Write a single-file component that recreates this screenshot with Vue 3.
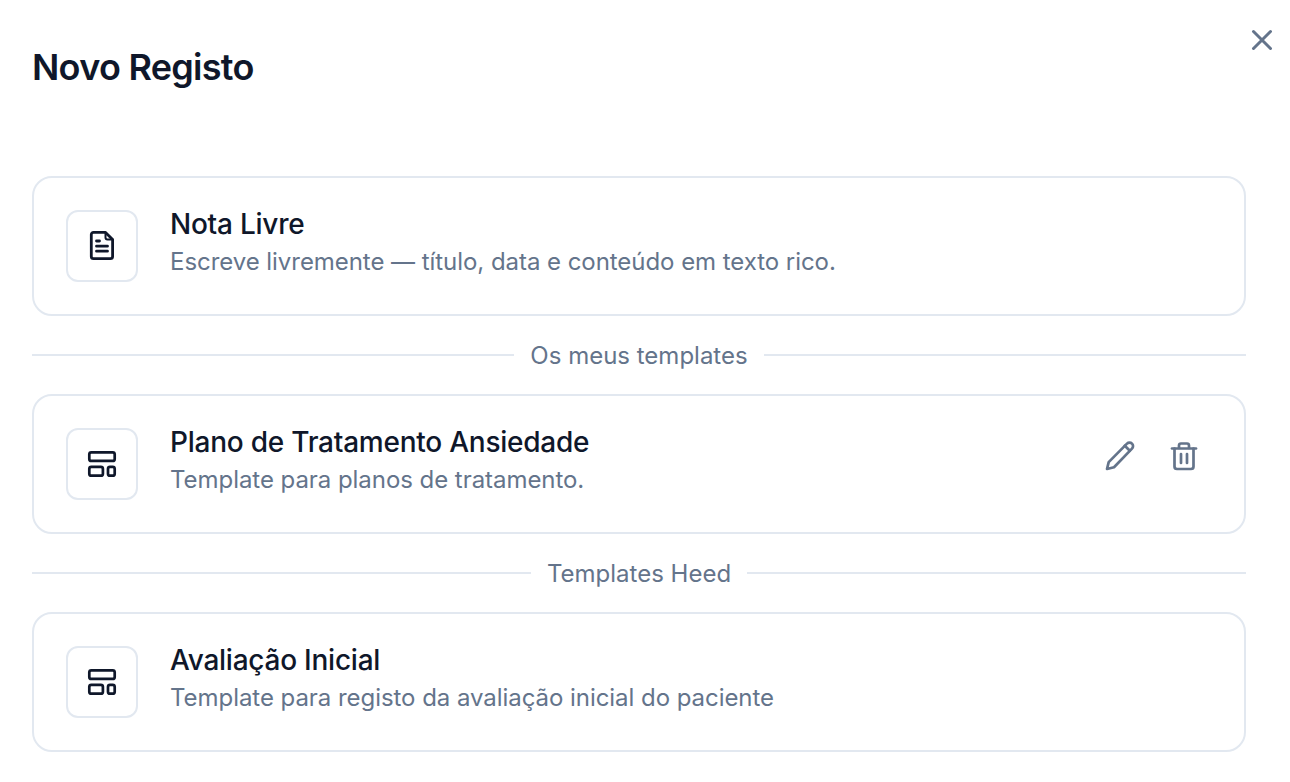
<template>
  <div class="dialog">
    <button class="close" aria-label="Fechar">
      <svg width="32" height="32" viewBox="0 0 32 32" fill="none" stroke="#64748b" stroke-width="3" stroke-linecap="round">
        <path d="M7.5 7.5l17 17M24.5 7.5l-17 17" />
      </svg>
    </button>
    <h1>Novo Registo</h1>

    <div class="list">
      <div class="card">
        <div class="icon-box">
          <svg width="32" height="32" viewBox="0 0 32 32" fill="none" stroke="#0f172a" stroke-width="2.8" stroke-linecap="round" stroke-linejoin="round">
            <path d="M7.5 2.4h12L26.6 9.5v17a2.2 2.2 0 0 1-2.2 2.2H7.5a2.2 2.2 0 0 1-2.2-2.2V4.6a2.2 2.2 0 0 1 2.2-2.2z" />
            <path d="M19.5 2.4v5a2 2 0 0 0 2 2h5" stroke-width="2" />
            <path d="M10.5 11h3M10.5 16.2h11M10.5 21.2h11" />
          </svg>
        </div>
        <div class="text">
          <div class="title">Nota Livre</div>
          <div class="desc">Escreve livremente — título, data e conteúdo em texto rico.</div>
        </div>
      </div>

      <template v-for="group in groups" :key="group.label">
        <div class="divider"><span>{{ group.label }}</span></div>
        <div class="card">
          <div class="icon-box">
            <svg width="32" height="32" viewBox="0 0 32 32" fill="none" stroke="#0f172a" stroke-width="2.7" stroke-linejoin="round">
              <rect x="3.3" y="4.3" width="25.4" height="8.6" rx="2" />
              <rect x="3.3" y="18.8" width="13.6" height="8.9" rx="2" />
              <rect x="22" y="18.8" width="6.7" height="8.9" rx="2" />
            </svg>
          </div>
          <div class="text">
            <div class="title">{{ group.title }}</div>
            <div class="desc">{{ group.desc }}</div>
          </div>
          <div v-if="group.editable" class="actions">
            <svg width="32" height="32" viewBox="0 0 32 32" fill="none" stroke="#64748b" stroke-width="2.7" stroke-linecap="round" stroke-linejoin="round">
              <path d="M3 29l1.7-6.9L23 3.6a3.4 3.4 0 0 1 5 5L10 27.3z" />
              <path d="M20.8 5.8l5 5" />
            </svg>
            <svg width="32" height="32" viewBox="0 0 32 32" fill="none" stroke="#64748b" stroke-width="2.7" stroke-linecap="round" stroke-linejoin="round">
              <path d="M4 8.5h24" />
              <path d="M11 8V5.5a2 2 0 0 1 2-2h6a2 2 0 0 1 2 2V8" />
              <path d="M6.5 8.5v18a2.5 2.5 0 0 0 2.5 2.5h14a2.5 2.5 0 0 0 2.5-2.5v-18" />
              <path d="M13 14v9M19 14v9" />
            </svg>
          </div>
        </div>
      </template>
    </div>
  </div>
</template>

<script setup>
const groups = [
  {
    label: 'Os meus templates',
    title: 'Plano de Tratamento Ansiedade',
    desc: 'Template para planos de tratamento.',
    editable: true
  },
  {
    label: 'Templates Heed',
    title: 'Avaliação Inicial',
    desc: 'Template para registo da avaliação inicial do paciente',
    editable: false
  }
]
</script>

<style>
html, body {
  background: #fff;
}
</style>

<style scoped>
.dialog {
  position: relative;
  height: 782px;
  box-sizing: border-box;
  padding: 43px 44px 0 32px;
  overflow: hidden;
  font-family: Inter, "Noto Sans", sans-serif;
  background: #fff;
}

.close {
  position: absolute;
  top: 24px;
  right: 12px;
  width: 32px;
  height: 32px;
  padding: 0;
  border: none;
  background: none;
  display: flex;
}

h1 {
  margin: 0 0 85px;
  font-size: 36px;
  line-height: 48px;
  font-weight: 600;
  letter-spacing: -0.72px;
  color: #0f172a;
}

.card {
  display: flex;
  align-items: center;
  gap: 32px;
  height: 140px;
  box-sizing: border-box;
  padding: 0 32px;
  border: 2px solid #e2e8f0;
  border-radius: 20px;
}

.icon-box {
  flex: none;
  width: 72px;
  height: 72px;
  box-sizing: border-box;
  border: 2px solid #e2e8f0;
  border-radius: 12px;
  display: flex;
  align-items: center;
  justify-content: center;
}

.text {
  flex: 1;
  padding-bottom: 8px;
}

.title {
  font-size: 28px;
  line-height: 40px;
  font-weight: 500;
  letter-spacing: -0.24px;
  color: #0f172a;
}

.desc {
  font-size: 24px;
  line-height: 36px;
  letter-spacing: -0.05px;
  color: #64748b;
}

.actions {
  display: flex;
  gap: 32px;
  margin: -16px 12px 0 0;
}

.divider {
  display: flex;
  align-items: center;
  gap: 16px;
  height: 78px;
  font-size: 24px;
  color: #64748b;
}

.divider::before,
.divider::after {
  content: "";
  flex: 1;
  height: 2px;
  background: #e2e8f0;
}
</style>
